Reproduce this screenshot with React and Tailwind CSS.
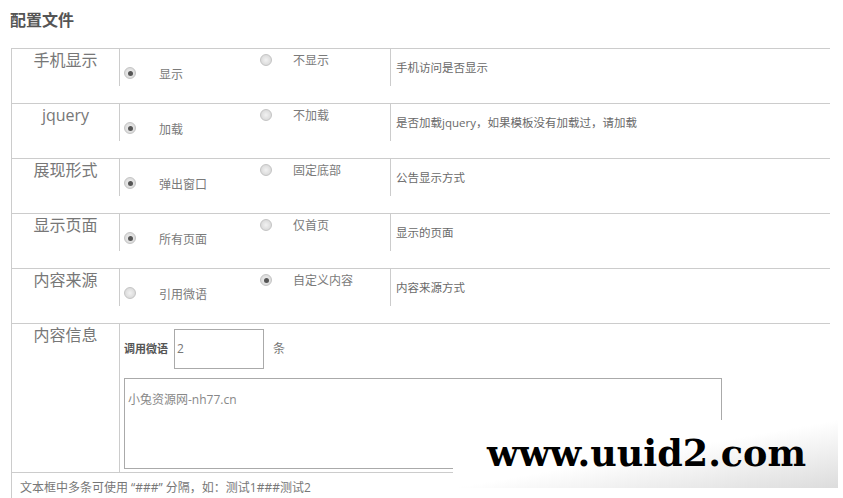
import React from "react";

const rows = [
    {
        label: "手机显示",
        options: [
            { text: "显示", checked: true },
            { text: "不显示", checked: false }
        ],
        tip: "手机访问是否显示"
    },
    {
        label: "jquery",
        options: [
            { text: "加载", checked: true },
            { text: "不加载", checked: false }
        ],
        tip: "是否加载jquery，如果模板没有加载过，请加载"
    },
    {
        label: "展现形式",
        options: [
            { text: "弹出窗口", checked: true },
            { text: "固定底部", checked: false }
        ],
        tip: "公告显示方式"
    },
    {
        label: "显示页面",
        options: [
            { text: "所有页面", checked: true },
            { text: "仅首页", checked: false }
        ],
        tip: "显示的页面"
    },
    {
        label: "内容来源",
        options: [
            { text: "引用微语", checked: false },
            { text: "自定义内容", checked: true }
        ],
        tip: "内容来源方式"
    }
];

function Radio({ checked }) {
    return (
        <span className="relative flex h-[12px] w-[12px] shrink-0 items-center justify-center rounded-full border border-[#c4c4c4] bg-radial from-[#f2f2f2] to-[#d2d2d2]">
            {checked && (
                <span className="h-[5px] w-[5px] rounded-full bg-[#555]" />
            )}
        </span>
    );
}

function OptionRow({ options }) {
    const [first, second] = options;
    return (
        <div className="flex h-[37px] w-[271px] shrink-0 items-start border-l border-[#ccc] pl-[4px]">
            <label className="mt-[18px] flex w-[136px] items-start">
                <Radio checked={first.checked} />
                <span className="ml-[23px] mt-[-1px] text-[12px] leading-[18px] text-[#7a7a7a]">
                    {first.text}
                </span>
            </label>
            <label className="mt-[5px] flex items-start">
                <Radio checked={second.checked} />
                <span className="ml-[21px] mt-[-2px] text-[12px] leading-[18px] text-[#7a7a7a]">
                    {second.text}
                </span>
            </label>
        </div>
    );
}

export default function App() {
    return (
        <div
            className="relative h-[498px] w-[843px] overflow-hidden bg-white"
            style={{ fontFamily: '"Open Sans", "Noto Sans CJK SC", sans-serif' }}
        >
            <h2 className="pl-[10px] pt-[9px] text-[16px] font-bold leading-[22px] text-[#555]">
                配置文件
            </h2>

            <div className="ml-[11px] mt-[17px] w-[819px] border-l border-[#ccc]">
                {rows.map((row) => (
                    <div
                        key={row.label}
                        className="flex h-[55px] border-t border-[#ccc]"
                    >
                        <div className="w-[107px] shrink-0 text-center text-[16px] leading-[22px] text-[#777]">
                            {row.label}
                        </div>
                        <OptionRow options={row.options} />
                        <div className="h-[37px] flex-1 border-l border-[#ccc] pl-[5px] pt-[10px] text-[11.5px] leading-[18px] text-[#6a6a6a]">
                            {row.tip}
                        </div>
                    </div>
                ))}

                <div className="flex h-[149px] border-t border-[#ccc]">
                    <div className="w-[107px] shrink-0 text-center text-[16px] leading-[22px] text-[#777]">
                        内容信息
                    </div>
                    <div className="flex-1 border-l border-[#ccc] pl-[4px] pt-[5px]">
                        <div className="flex items-center">
                            <span className="text-[11px] font-bold text-[#555]">
                                调用微语
                            </span>
                            <div className="ml-[6px] h-[40px] w-[90px] border border-[#aaa] pl-[2px] text-[12px] leading-[38px] text-[#777]">
                                2
                            </div>
                            <span className="ml-[9px] text-[12px] text-[#777]">
                                条
                            </span>
                        </div>
                        <div className="mt-[9px] h-[91px] w-[598px] border border-[#aaa] pl-[3px] pt-[12px] text-[12px] leading-[18px] text-[#888]">
                            小兔资源网-nh77.cn
                        </div>
                    </div>
                </div>

                <div className="h-[40px] border-t border-[#ccc] pl-[8px] pt-[6px] text-[12px] leading-[18px] text-[#777]">
                    文本框中多条可使用 “###” 分隔，如：测试1###测试2
                </div>
            </div>

            <div className="absolute left-[453px] top-[420px] flex h-[68px] w-[385px] items-center bg-linear-to-br from-white via-white to-[#dcdcdc] pl-[34px]">
                <span
                    className="text-[36.5px] font-bold leading-none text-black"
                    style={{ fontFamily: '"DejaVu Serif", serif' }}
                >
                    www.uuid2.com
                </span>
            </div>
        </div>
    );
}
